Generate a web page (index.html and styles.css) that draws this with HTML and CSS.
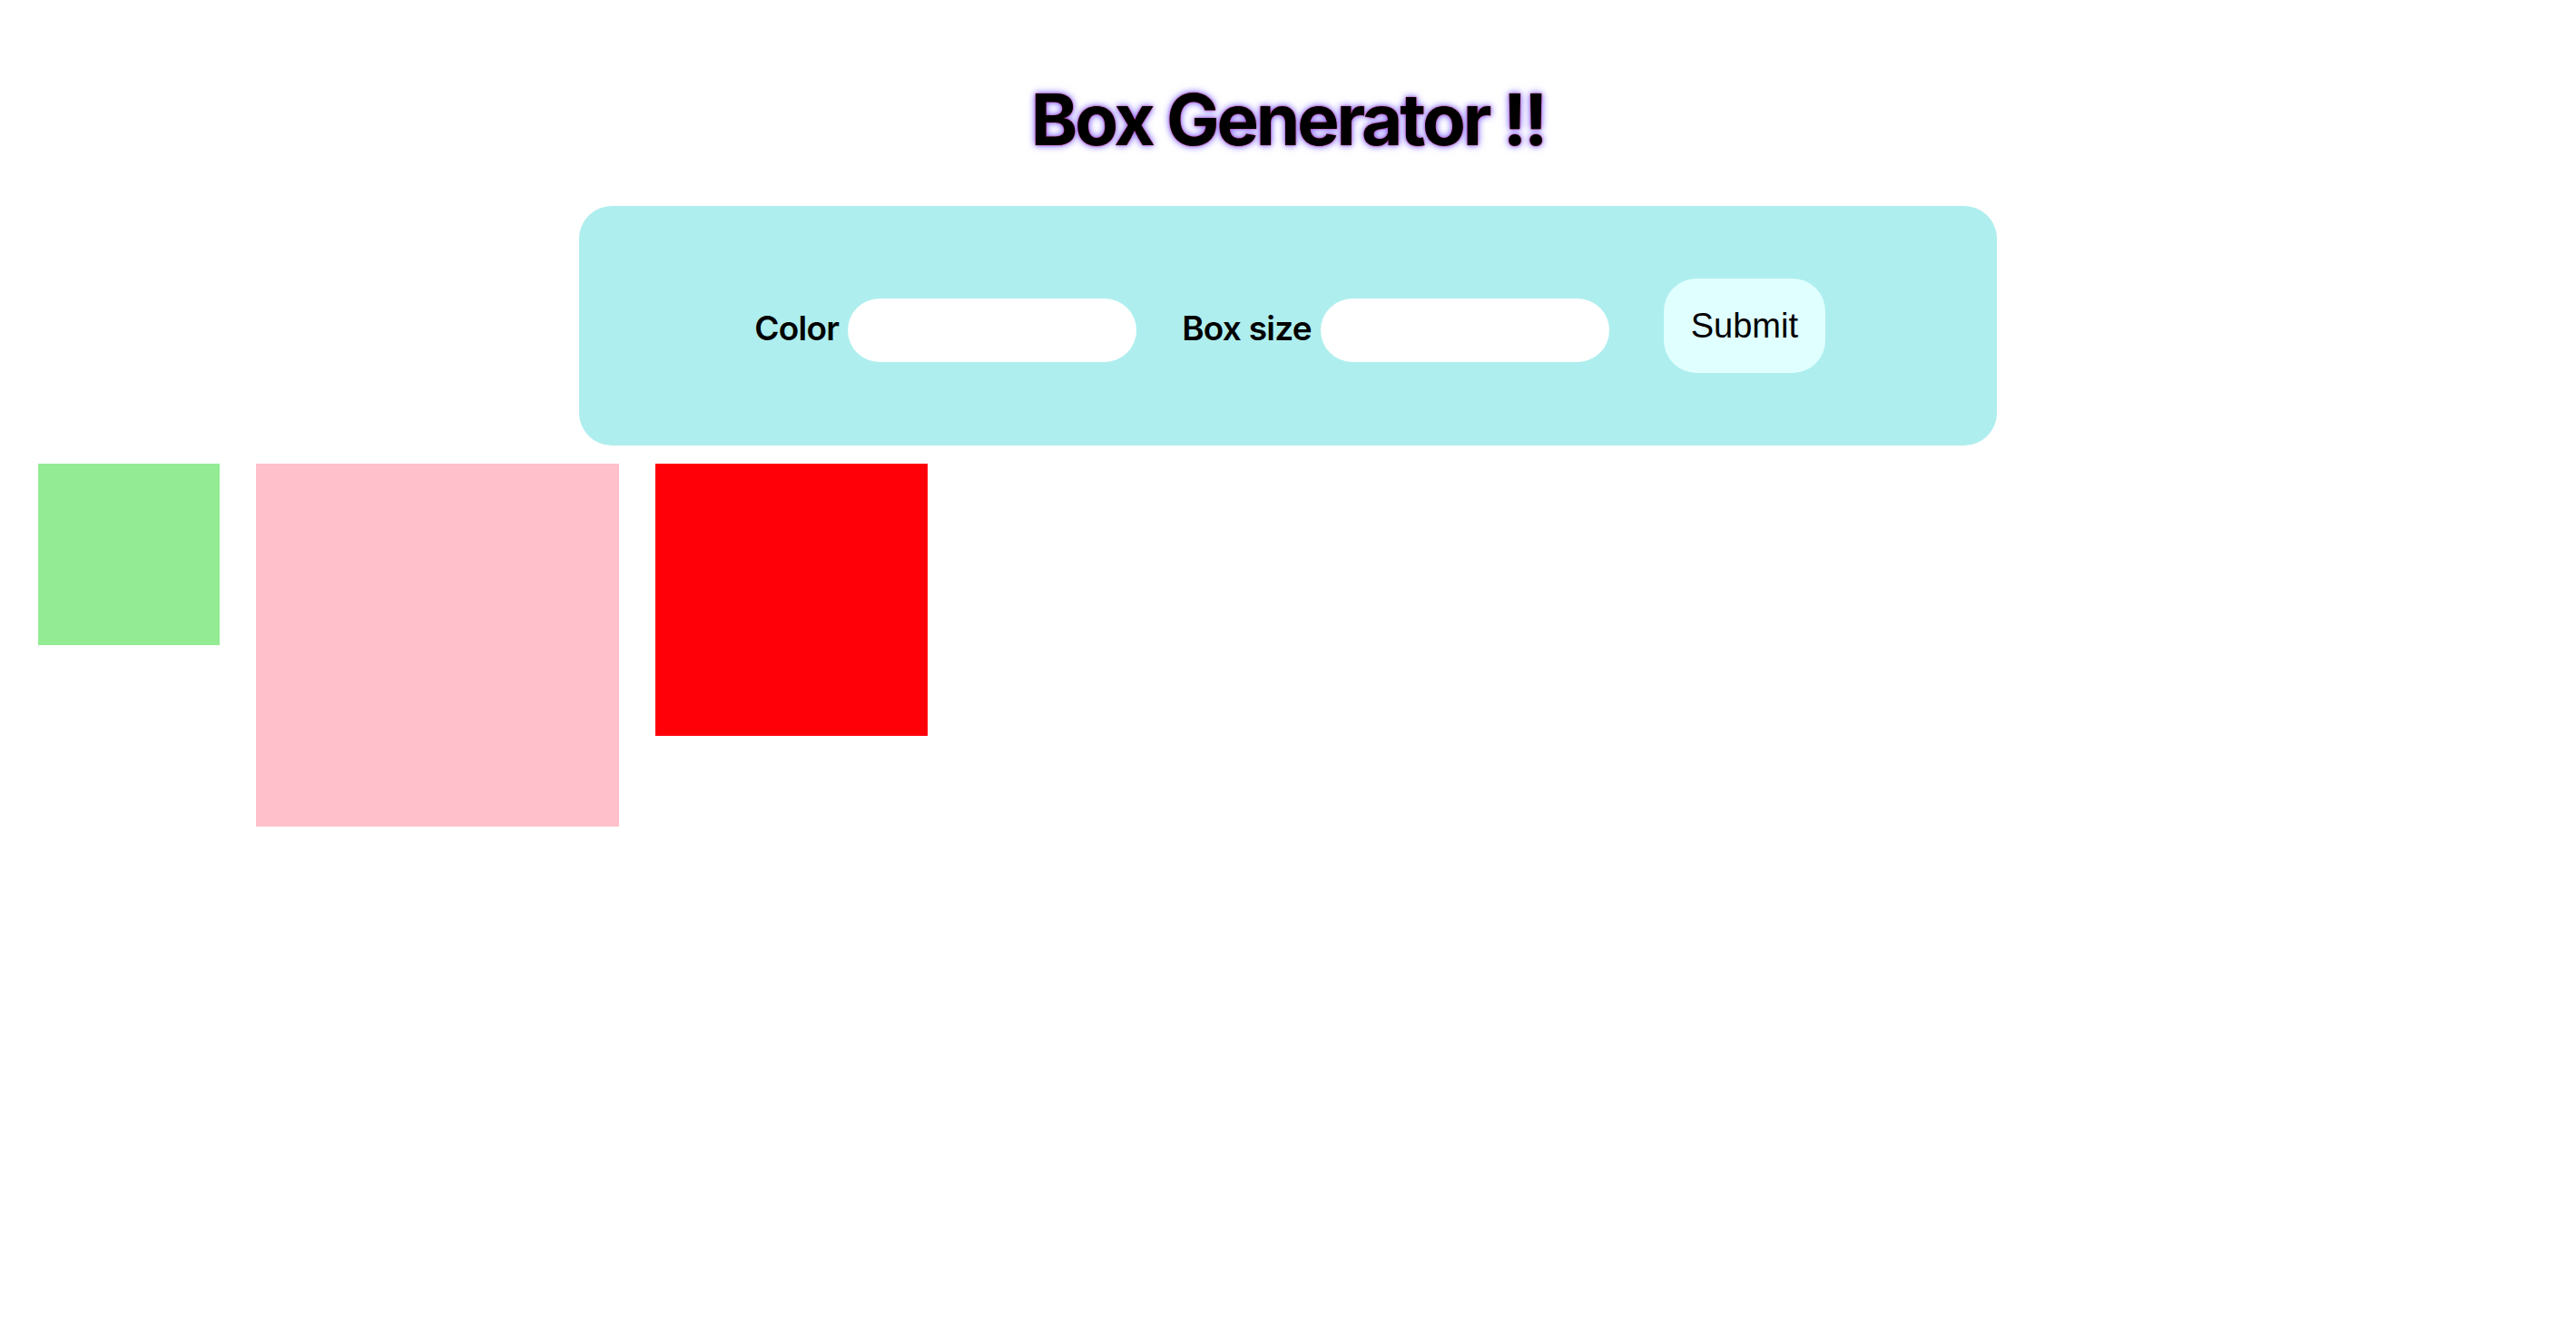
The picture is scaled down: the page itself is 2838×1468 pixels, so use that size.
FILE: index.html
```html
<!DOCTYPE html>
<html>
<head>
<meta charset="utf-8">
<title>Box Generator</title>
<link rel="stylesheet" href="styles.css">
</head>
<body>
<h1 class="title">Box Generator !!</h1>
<form class="panel">
  <label class="field-label" for="color">Color</label>
  <input class="field-input" id="color" type="text">
  <label class="field-label second" for="size">Box size</label>
  <input class="field-input" id="size" type="text">
  <button class="submit" type="button">Submit</button>
</form>
<div class="boxes">
  <div class="box" style="background:#93ec93;width:200px;height:200px"></div>
  <div class="box" style="background:#ffc0cb;width:400px;height:400px"></div>
  <div class="box" style="background:#ff0009;width:300px;height:300px"></div>
</div>
</body>
</html>
```
FILE: styles.css
```css
body {
  margin: 8px;
  background: #ffffff;
  font-family: Inter, "Noto Sans", sans-serif;
  color: #000;
}
.title {
  margin: 77px 0 48px;
  text-align: center;
  font-family: Inter, sans-serif;
  font-weight: 700;
  font-size: 78px;
  line-height: 94px;
  letter-spacing: -0.04em;
  text-shadow: 0 0 2px #d8186a, 0 0 7px #7d6cff, 0 0 10px rgba(150, 120, 255, 0.6);
}
.panel {
  box-sizing: border-box;
  width: 1562px;
  height: 264px;
  margin: 0 auto;
  padding-left: 4px;
  background: #afeeee;
  border-radius: 36px;
  display: flex;
  align-items: center;
  justify-content: center;
}
.field-label {
  font-family: Inter, sans-serif;
  font-weight: 600;
  font-size: 37px;
  letter-spacing: -0.02em;
  margin-top: 4px;
  margin-right: 10px;
}
.field-label.second {
  margin-left: 50px;
}
.field-input {
  box-sizing: border-box;
  width: 318px;
  height: 70px;
  margin-top: 10px;
  border: none;
  border-radius: 35px;
  background: #fff;
  padding: 0 20px;
  outline: none;
}
.submit {
  margin-left: 60px;
  box-sizing: border-box;
  width: 178px;
  height: 104px;
  border: none;
  border-radius: 36px;
  background: #e0ffff;
  font-family: "Liberation Sans", Arial, sans-serif;
  font-size: 38px;
  color: #000;
  padding: 0;
}
.boxes {
  display: flex;
  align-items: flex-start;
  gap: 40px;
  margin-top: 20px;
  padding-left: 34px;
}
.box {
  flex: none;
}
```
